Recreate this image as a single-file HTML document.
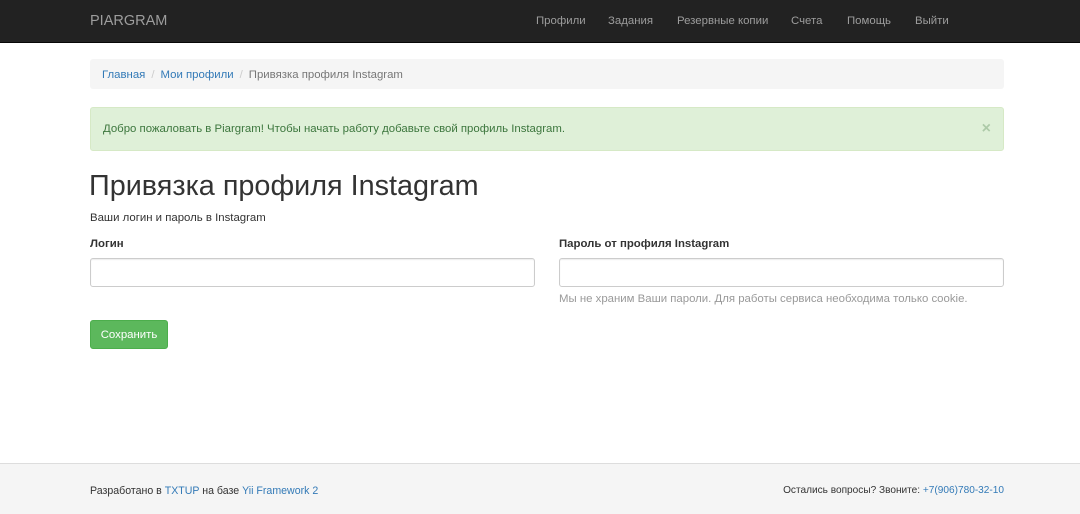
<!DOCTYPE html>
<html><head><meta charset="utf-8"><style>
*{box-sizing:border-box;margin:0;padding:0}
body{width:1080px;height:514px;font-family:"Liberation Sans",sans-serif;font-size:11.4px;color:#333;background:#fff;position:relative;overflow:hidden}
.nav{position:absolute;left:0;top:0;width:1080px;height:43px;background:#222;border-bottom:1px solid #080808}
.brand{position:absolute;left:90px;top:13px;font-size:14.5px;color:#9d9d9d}
.menu{position:absolute;top:15px;font-size:11.4px;color:#9d9d9d}
.bc{position:absolute;left:90px;top:59px;width:914px;height:30px;background:#f5f5f5;border-radius:3px;padding:10px 12px;font-size:11.4px;color:#777;line-height:1.15}
.bc a{color:#337ab7}.bc .s{color:#ccc;padding:0 6px}
.al{position:absolute;left:90px;top:107px;width:914px;height:44px;background:#dff0d8;border:1px solid #d6e9c6;border-radius:3px;color:#3c763d;padding:15px 12px;font-size:11.4px;line-height:1.15}
.al .x{position:absolute;right:12px;top:12px;font-size:16px;font-weight:bold;color:#3c763d;opacity:.3}
h1{position:absolute;left:89px;top:170px;font-size:28.8px;font-weight:normal;color:#333}
.t{position:absolute;font-size:11.4px;line-height:1.15}
.lbl{font-weight:bold}
.in{position:absolute;top:258px;width:445px;height:29px;border:1px solid #ccc;border-radius:3px;box-shadow:inset 0 1px 1px rgba(0,0,0,.075)}
.btn{position:absolute;left:90px;top:320px;width:78px;height:29px;background:#5cb85c;border:1px solid #4cae4c;border-radius:3px;color:#fff;font-size:11.4px;text-align:center;line-height:28px}
.ft{position:absolute;left:0;top:463px;width:1080px;height:51px;background:#f5f5f5;border-top:1px solid #ddd}
.ft a{color:#337ab7}
</style></head><body>
<div class="nav"><div class="brand">PIARGRAM</div>
<span class="menu" style="left:536px">Профили</span>
<span class="menu" style="left:608px">Задания</span>
<span class="menu" style="left:677px">Резервные копии</span>
<span class="menu" style="left:791px">Счета</span>
<span class="menu" style="left:847px">Помощь</span>
<span class="menu" style="left:915px">Выйти</span></div>
<div class="bc"><a>Главная</a><span class="s">/</span><a>Мои профили</a><span class="s">/</span>Привязка профиля Instagram</div>
<div class="al">Добро пожаловать в Piargram! Чтобы начать работу добавьте свой профиль Instagram.<span class="x">×</span></div>
<h1>Привязка профиля Instagram</h1>
<div class="t" style="left:90px;top:212px">Ваши логин и пароль в Instagram</div>
<div class="t lbl" style="left:90px;top:238px">Логин</div>
<div class="t lbl" style="left:559px;top:238px">Пароль от профиля Instagram</div>
<div class="in" style="left:90px"></div>
<div class="in" style="left:559px"></div>
<div class="t" style="left:559px;top:293px;color:#999">Мы не храним Ваши пароли. Для работы сервиса необходима только cookie.</div>
<div class="btn">Сохранить</div>
<div class="ft">
<div class="t" style="left:90px;top:21px;font-size:10.6px">Разработано в <a>TXTUP</a> на базе <a>Yii Framework 2</a></div>
<div class="t" style="right:76px;top:21px;font-size:10.1px">Остались вопросы? Звоните: <a>+7(906)780-32-10</a></div>
</div>
</body></html>
